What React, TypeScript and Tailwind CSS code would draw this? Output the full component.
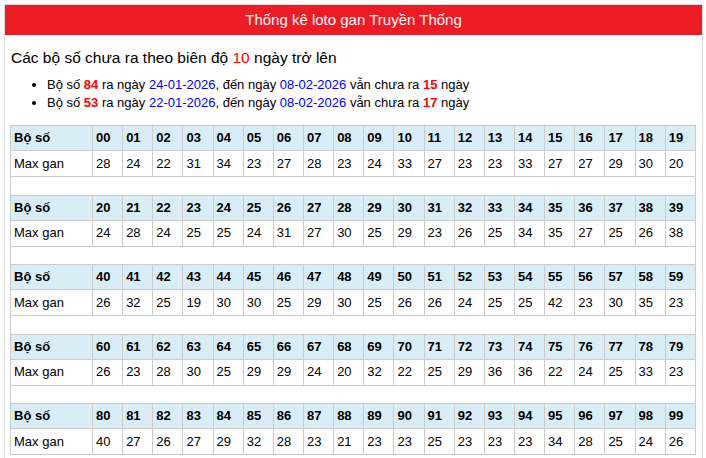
import React from "react";

const groups: { nums: string[]; vals: number[] }[] = [
  { nums: [], vals: [28, 24, 22, 31, 34, 23, 27, 28, 23, 24, 33, 27, 23, 23, 33, 27, 27, 29, 30, 20] },
  { nums: [], vals: [24, 28, 24, 25, 25, 24, 31, 27, 30, 25, 29, 23, 26, 25, 34, 35, 27, 25, 26, 38] },
  { nums: [], vals: [26, 32, 25, 19, 30, 30, 25, 29, 30, 25, 26, 26, 24, 25, 25, 42, 23, 30, 35, 23] },
  { nums: [], vals: [26, 23, 28, 30, 25, 29, 29, 24, 20, 32, 22, 25, 29, 36, 36, 22, 24, 25, 33, 23] },
  { nums: [], vals: [40, 27, 26, 27, 29, 32, 28, 23, 21, 23, 23, 25, 23, 23, 23, 34, 28, 25, 24, 26] },
];
groups.forEach((g, gi) => {
  g.nums = Array.from({ length: 20 }, (_, i) => String(gi * 20 + i).padStart(2, "0"));
});

export default function App() {
  return (
    <div className="w-[706px] h-[458px] overflow-hidden bg-white text-black" style={{ fontFamily: '"Liberation Sans", Arial, sans-serif' }}>
      <div className="ml-[4px] mt-[4px] w-[699px] border border-[#dcdcdc]">
        <div className="h-[30px] bg-[#ed1c24] text-white text-[15px] flex items-center justify-center">
          Thống kê loto gan Truyền Thống
        </div>
        <div className="px-[5px] pb-[10px]">
          <div className="mt-[12px] text-[15.5px] leading-[22px] pl-[1px]">
            Các bộ số chưa ra theo biên độ <span className="text-[#ff0000]">10</span> ngày trở lên
          </div>
          <ul className="mt-[7px] list-disc pl-[37px] text-[13px] leading-[18px]">
            <li>
              Bộ số <b className="text-[#ff0000]">84</b> ra ngày <span className="text-[#0000ff]">24-01-2026</span>, đến ngày{" "}
              <span className="text-[#0000ff]">08-02-2026</span> vẫn chưa ra <b className="text-[#ff0000]">15</b> ngày
            </li>
            <li>
              Bộ số <b className="text-[#ff0000]">53</b> ra ngày <span className="text-[#0000ff]">22-01-2026</span>, đến ngày{" "}
              <span className="text-[#0000ff]">08-02-2026</span> vẫn chưa ra <b className="text-[#ff0000]">17</b> ngày
            </li>
          </ul>
          <table className="mt-[13px] w-[686px] table-fixed border-collapse text-[13px]">
            <colgroup>
              <col className="w-[82px]" />
              {Array.from({ length: 20 }, (_, i) => (
                <col key={i} />
              ))}
            </colgroup>
            <tbody>
              {groups.map((g, gi) => (
                <React.Fragment key={gi}>
                  <tr className="h-[25px] bg-[#d9edf7] font-bold">
                    <td className="border border-[#cccccc] px-[3px] text-left align-middle">Bộ số</td>
                    {g.nums.map((n) => (
                      <td key={n} className="border border-[#cccccc] px-[3px] text-left align-middle">
                        {n}
                      </td>
                    ))}
                  </tr>
                  <tr className="h-[26px]">
                    <td className="border border-[#cccccc] px-[3px] text-left align-middle">Max gan</td>
                    {g.vals.map((v, i) => (
                      <td key={i} className="border border-[#cccccc] px-[3px] text-left align-middle">
                        {v}
                      </td>
                    ))}
                  </tr>
                  {gi < groups.length - 1 && (
                    <tr className="h-[18.5px]">
                      <td colSpan={21} className="border border-[#cccccc]"></td>
                    </tr>
                  )}
                </React.Fragment>
              ))}
            </tbody>
          </table>
        </div>
      </div>
    </div>
  );
}
